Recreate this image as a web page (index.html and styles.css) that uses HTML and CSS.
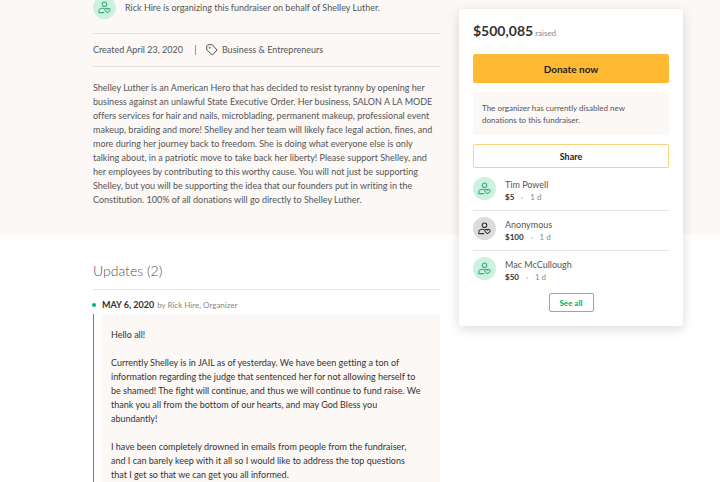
FILE: index.html
```html
<!DOCTYPE html>
<html lang="en">
<head>
  <meta charset="UTF-8" />
  <meta name="viewport" content="width=device-width, initial-scale=1" />
  <title>Fundraiser for Shelley Luther</title>
  <link rel="stylesheet" href="styles.css">
</head>
<body>

  <!-- Shared icons -->
  <svg class="sprite" aria-hidden="true">
    <symbol id="icon-donor" viewBox="0 0 24 24">
      <circle cx="12" cy="6" r="4.2" />
      <path d="M11.500 21.500H1.500v-2.500c0-3.500 3-5.500 7-5.500 1.500 0 2.800.3 3.800.9" />
      <path d="M17.500 21.500c-3.500-2-5-3.400-5-5.200 0-2.800 3.700-3.700 5-1.200 1.300-2.500 5-1.600 5 1.200 0 1.800-1.500 3.200-5 5.200z" />
    </symbol>
    <symbol id="icon-tag" viewBox="0 0 24 24">
      <path d="M1.500 3.500 3.500 1.500H12.500l9.500 10.500-9 10L1.500 12z" />
      <circle cx="7.500" cy="7.500" r="1" />
    </symbol>
  </svg>

  <div class="page">

    <!-- Story -->
    <section class="story">
      <div class="story-body">
        <div class="organizer">
          <span class="avatar"><svg><use href="#icon-donor" /></svg></span>
          <p>Rick Hire is organizing this fundraiser on behalf of Shelley Luther.</p>
        </div>
        <div class="meta">
          <span class="created">Created April 23, 2020</span>
          <a class="category" href="#"><svg><use href="#icon-tag" /></svg>Business &amp; Entrepreneurs</a>
        </div>
        <p class="description">Shelley Luther is an American Hero that has decided to resist tyranny by opening her business against an unlawful State Executive Order. Her business, SALON A LA MODE offers services for hair and nails, microblading, permanent makeup, professional event makeup, braiding and more! Shelley and her team will likely face legal action, fines, and more during her journey back to freedom. She is doing what everyone else is only talking about, in a patriotic move to take back her liberty! Please support Shelley, and her employees by contributing to this worthy cause. You will not just be supporting Shelley, but you will be supporting the idea that our founders put in writing in the Constitution. 100% of all donations will go directly to Shelley Luther.</p>
      </div>
    </section>

    <!-- Updates -->
    <section class="updates">
      <h2>Updates (2)</h2>
      <div class="update-head">
        <span class="dot"></span>
        <strong>MAY 6, 2020</strong>
        <span class="author">by Rick Hire, Organizer</span>
      </div>
      <div class="update-line">
        <div class="update-text">
          <p>Hello all!</p>
          <p>Currently Shelley is in JAIL as of yesterday. We have been getting a ton of information regarding the judge that sentenced her for not allowing herself to be shamed! The fight will continue, and thus we will continue to fund raise. We thank you all from the bottom of our hearts, and may God Bless you abundantly!</p>
          <p>I have been completely drowned in emails from people from the fundraiser, and I can barely keep with it all so I would like to address the top questions that I get so that we can get you all informed.</p>
        </div>
      </div>
    </section>

    <!-- Donation card -->
    <aside class="card">
      <p class="total"><strong>$500,085</strong> raised</p>
      <button class="btn btn-donate" type="button">Donate now</button>
      <p class="notice">The organizer has currently disabled new donations to this fundraiser.</p>
      <button class="btn btn-share" type="button">Share</button>
      <ul class="donors">
        <li>
          <span class="avatar"><svg><use href="#icon-donor" /></svg></span>
          <div>
            <p class="name">Tim Powell</p>
            <p class="gift"><strong>$5</strong><span class="sep"></span>1 d</p>
          </div>
        </li>
        <li>
          <span class="avatar avatar-gray"><svg><use href="#icon-donor" /></svg></span>
          <div>
            <p class="name">Anonymous</p>
            <p class="gift"><strong>$100</strong><span class="sep"></span>1 d</p>
          </div>
        </li>
        <li>
          <span class="avatar"><svg><use href="#icon-donor" /></svg></span>
          <div>
            <p class="name">Mac McCullough</p>
            <p class="gift"><strong>$50</strong><span class="sep"></span>1 d</p>
          </div>
        </li>
      </ul>
      <button class="btn btn-all" type="button">See all</button>
    </aside>

  </div>
</body>
</html>
```
FILE: styles.css
```css
* { box-sizing: border-box; margin: 0; padding: 0; }
body { font-family: Lato, sans-serif; font-size: 9px; line-height: 14px; font-variant-ligatures: none; color: #555; background: #fff; }
button { font-family: inherit; cursor: pointer; }
.sprite { display: none; }

/* ===== Page grid ===== */
.page {
  display: grid;
  grid-template-columns: 93px minmax(0, 1fr) 224px 37px;
  grid-template-rows: auto 1fr;
  height: 100vh;
  overflow: hidden;
}

/* ===== Avatars ===== */
.avatar {
  display: flex;
  align-items: center;
  justify-content: center;
  flex-shrink: 0;
  width: 23px;
  height: 23px;
  border-radius: 50%;
  background: #ccf1e0;
  color: #3fae7c;
}
.avatar svg { width: 13px; height: 13px; fill: none; stroke: currentColor; stroke-width: 2; stroke-linejoin: round; }
.avatar-gray { background: #dcdcdc; color: #333; }

/* ===== Story ===== */
.story {
  grid-column: 1 / -1;
  grid-row: 1;
  display: grid;
  grid-template-columns: subgrid;
  background: #fbf8f6;
  padding-bottom: 27px;
}
.story-body { grid-column: 2; margin-right: 19px; }
.organizer { display: flex; align-items: center; gap: 9px; margin-top: -4px; padding-bottom: 14px; }
.meta { display: flex; align-items: center; height: 34px; border-top: 1px solid #e4e2e0; border-bottom: 1px solid #e4e2e0; }
.created { line-height: 10px; padding-right: 12px; border-right: 1px solid #999; }
.category { display: flex; align-items: center; gap: 4px; margin-left: 10px; color: inherit; text-decoration: none; }
.category svg { width: 12px; height: 12px; fill: none; stroke: currentColor; stroke-width: 2; stroke-linejoin: round; }
.description { padding-top: 14px; }

/* ===== Updates ===== */
.updates { grid-column: 2; grid-row: 2; margin-right: 19px; padding-top: 28px; display: flex; flex-direction: column; }
.updates h2 { font-size: 14px; font-weight: 300; line-height: 18px; padding-bottom: 9px; border-bottom: 1px solid #e4e4e4; }
.update-head { display: flex; align-items: center; height: 24px; padding-top: 6px; color: #888; font-size: 8px; }
.update-head strong { color: #333; font-size: 9px; margin: 0 3px 0 6px; }
.dot { width: 4px; height: 4px; margin-left: -1px; border-radius: 50%; background: #02b864; }
.update-line { flex: 1; border-left: 1px solid #02b864; padding-left: 8px; }
.update-text { min-height: 100%; padding: 14px 18px 0 9px; background: #fbf8f6; color: #333; }
.update-text p { margin-bottom: 14px; }
.update-text p:last-child { margin-bottom: 0; }

/* ===== Donation card ===== */
.card {
  grid-column: 3;
  grid-row: 1 / 3;
  align-self: start;
  margin-top: 9px;
  padding: 14px;
  background: #fff;
  border-radius: 3px;
  box-shadow: 0 3px 12px rgba(0,0,0,0.15);
}
.total { font-size: 8px; line-height: 16px; color: #888; margin-bottom: 13px; }
.total strong { font-size: 14px; color: #333; }
.btn { display: block; width: 100%; border-radius: 2px; font-size: 9px; font-weight: bold; color: #222; background: #fff; }
.btn-donate { height: 29px; border: none; background: #ffb933; font-size: 10px; }
.notice { margin: 9px 0; padding: 10px 9px 9px; border-radius: 2px; background: #fbf8f6; font-size: 8px; line-height: 12px; }
.btn-share { height: 24px; border: 1px solid #fcd27c; }
.donors { list-style: none; margin-top: 3px; }
.donors li { display: flex; align-items: flex-start; gap: 9px; height: 40px; padding-top: 6px; border-bottom: 1px solid #e4e4e4; }
.donors li:last-child { border-bottom: none; }
.name { padding-top: 1px; line-height: 13px; }
.gift { display: flex; align-items: center; line-height: 13px; font-size: 8px; color: #888; }
.gift strong { color: #333; }
.sep { width: 2px; height: 2px; margin: 0 7px; border-radius: 50%; background: #ccc; }
.btn-all { width: 45px; height: 19px; margin: 2px auto 0; border: 1px solid #4fcf93; color: #02b864; font-size: 8px; font-weight: 900; }
```
